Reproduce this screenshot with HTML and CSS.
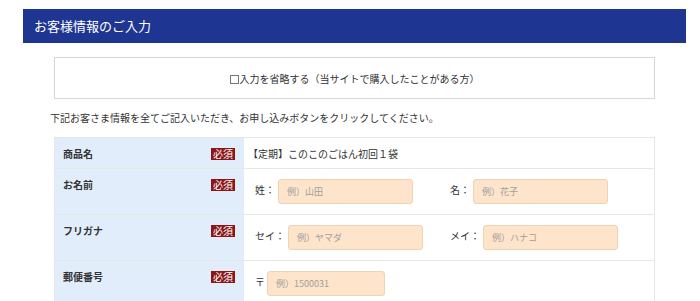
FILE: index.html
```html
<!DOCTYPE html>
<html lang="ja">
<head>
  <meta charset="UTF-8">
  <meta name="viewport" content="width=device-width, initial-scale=1">
  <title>お客様情報のご入力</title>
  <link rel="stylesheet" href="styles.css">
</head>
<body>
  <div class="wrap">
    <h2 class="section-title">お客様情報のご入力</h2>

    <!-- skip input -->
    <div class="skip-box">
      <label><input type="checkbox" class="skip-check">入力を省略する（当サイトで購入したことがある方）</label>
    </div>

    <p class="lead">下記お客さま情報を全てご記入いただき、お申し込みボタンをクリックしてください。</p>

    <!-- form table -->
    <table class="form-table">
      <tr class="row-short">
        <th><span class="th-label">商品名</span><span class="req">必須</span></th>
        <td>【定期】このこのごはん初回１袋</td>
      </tr>
      <tr>
        <th><span class="th-label">お名前</span><span class="req">必須</span></th>
        <td>
          <span class="field-group"><span class="field-name">姓：</span><input type="text" class="text-input" placeholder="例）山田"></span><span class="field-group"><span class="field-name">名：</span><input type="text" class="text-input" placeholder="例）花子"></span>
        </td>
      </tr>
      <tr>
        <th><span class="th-label">フリガナ</span><span class="req">必須</span></th>
        <td>
          <span class="field-group"><span class="field-name">セイ：</span><input type="text" class="text-input" placeholder="例）ヤマダ"></span><span class="field-group"><span class="field-name">メイ：</span><input type="text" class="text-input" placeholder="例）ハナコ"></span>
        </td>
      </tr>
      <tr>
        <th><span class="th-label">郵便番号</span><span class="req">必須</span></th>
        <td>
          <span class="field-name zip-mark">〒</span><input type="text" class="text-input zip-input" placeholder="例）1500031">
        </td>
      </tr>
    </table>
  </div>
</body>
</html>
```

FILE: styles.css
```css
/* General Page Styling */
body {
  margin: 0;
  font-family: "Noto Sans CJK JP", "Noto Sans", sans-serif;
  font-size: 10px;
  color: #333;
  background-color: #fff;
}
.wrap {
  width: 663px;
  margin-left: 23px;
  padding-top: 9px;
}
.section-title {
  margin: 0;
  height: 34px;
  line-height: 34px;
  padding-left: 11px;
  font-size: 13px;
  font-weight: normal;
  color: #fff;
  background-color: #1f3592; /* Navy header */
}

/* Skip box */
.skip-box {
  margin: 14px 31px 0;
  height: 40px;
  border: 1px solid #d6d6d6;
  display: flex;
  align-items: center;
  justify-content: center;
}
.skip-check {
  appearance: none;
  width: 9px;
  height: 9px;
  margin: 0 1px 0 0;
  border: 1px solid #777;
  background: #fff;
  vertical-align: -1px;
}

.lead {
  margin: 11px 0 0 27px;
  line-height: 15px;
}

/* Form table */
.form-table {
  margin: 12px 0 0 31px;
  width: 601px;
  border-collapse: collapse;
  border: 1px solid #e6e6e6;
}
.form-table th,
.form-table td {
  border-bottom: 1px solid #e6e6e6;
}
.form-table th {
  width: 172px;
  padding: 10px 9px 0 8px;
  vertical-align: top;
  text-align: left;
  line-height: 12px;
  background-color: #e2edfc; /* Light blue label column */
}
.th-label {
  font-weight: bold;
}
.req {
  float: right;
  width: 24px;
  height: 12px;
  line-height: 12px;
  text-align: center;
  font-size: 10px;
  font-weight: normal;
  color: #fff;
  background-color: #8a1616; /* Dark red badge */
}
.form-table td {
  padding: 10px 12px 10px 11px;
  vertical-align: middle;
  white-space: nowrap;
}
.row-short td {
  padding: 0 12px 0 4px;
  height: 30px;
}

.field-group {
  display: inline-block;
  width: 195px;
}
.field-group + .field-group {
  width: auto;
}
.field-name {
  margin-right: 3px;
}
.zip-mark {
  margin-right: 2px;
}
.text-input {
  box-sizing: border-box;
  width: 135px;
  height: 25px;
  padding: 0 8px;
  font-family: inherit;
  font-size: 9px;
  color: #333;
  background-color: #fde4ca; /* Peach input */
  border: 1px solid #f0d3b4;
  border-radius: 3px;
  vertical-align: middle;
}
.text-input::placeholder {
  color: #a0a0a0;
}
.zip-input {
  width: 118px;
}
```
